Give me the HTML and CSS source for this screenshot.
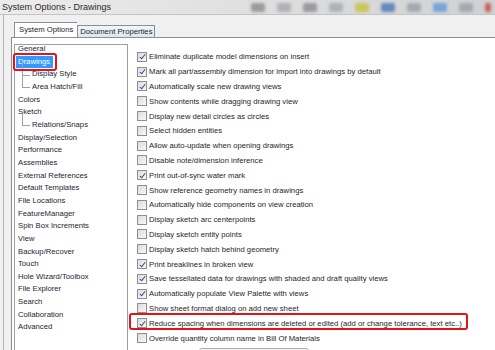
FILE: index.html
```html
<!DOCTYPE html>
<html lang="en">
<head>
    <meta charset="UTF-8">
    <title>System Options - Drawings</title>
    <link rel="stylesheet" href="styles.css">
</head>
<body>
    <div class="topbar">
        <span class="title">System Options - Drawings</span>
        <div class="toolbar">
            <span class="blob g1"></span>
            <span class="blob g2"></span>
            <span class="blob g1"></span>
            <span class="blob g2"></span>
            <span class="blob yellow"></span>
            <span class="blob blue"></span>
            <span class="blob gray"></span>
            <span class="blob sky"></span>
            <span class="blob gray"></span>
            <span class="blob red"></span>
            <span class="blob teal"></span>
        </div>
    </div>

    <div class="dialog">
        <div class="tabs">
            <div class="tab active">System Options</div>
            <div class="tab">Document Properties</div>
        </div>

        <div class="panel">
            <ul class="tree">
                <li>General</li>
                <li><span class="selected">Drawings</span></li>
                <li class="child">Display Style</li>
                <li class="child last">Area Hatch/Fill</li>
                <li>Colors</li>
                <li>Sketch</li>
                <li class="child last">Relations/Snaps</li>
                <li>Display/Selection</li>
                <li>Performance</li>
                <li>Assemblies</li>
                <li>External References</li>
                <li>Default Templates</li>
                <li>File Locations</li>
                <li>FeatureManager</li>
                <li>Spin Box Increments</li>
                <li>View</li>
                <li>Backup/Recover</li>
                <li>Touch</li>
                <li>Hole Wizard/Toolbox</li>
                <li>File Explorer</li>
                <li>Search</li>
                <li>Collaboration</li>
                <li>Advanced</li>
            </ul>

            <div class="options">
                <div class="row"><span class="cb on"></span>Eliminate duplicate model dimensions on insert</div>
                <div class="row"><span class="cb on"></span>Mark all part/assembly dimension for import into drawings by default</div>
                <div class="row"><span class="cb on"></span>Automatically scale new drawing views</div>
                <div class="row"><span class="cb"></span>Show contents while dragging drawing view</div>
                <div class="row"><span class="cb"></span>Display new detail circles as circles</div>
                <div class="row"><span class="cb"></span>Select hidden entities</div>
                <div class="row"><span class="cb"></span>Allow auto-update when opening drawings</div>
                <div class="row"><span class="cb"></span>Disable note/dimension inference</div>
                <div class="row"><span class="cb on"></span>Print out-of-sync water mark</div>
                <div class="row"><span class="cb"></span>Show reference geometry names in drawings</div>
                <div class="row"><span class="cb"></span>Automatically hide components on view creation</div>
                <div class="row"><span class="cb"></span>Display sketch arc centerpoints</div>
                <div class="row"><span class="cb"></span>Display sketch entity points</div>
                <div class="row"><span class="cb"></span>Display sketch hatch behind geometry</div>
                <div class="row"><span class="cb on"></span>Print breaklines in broken view</div>
                <div class="row"><span class="cb on"></span>Save tessellated data for drawings with shaded and draft quality views</div>
                <div class="row"><span class="cb on"></span>Automatically populate View Palette with views</div>
                <div class="row"><span class="cb"></span>Show sheet format dialog on add new sheet</div>
                <div class="row"><span class="cb on"></span>Reduce spacing when dimensions are deleted or edited (add or change tolerance, text etc..)</div>
                <div class="row"><span class="cb"></span>Override quantity column name in Bill Of Materials</div>
                <div class="button"></div>
            </div>
        </div>
    </div>

    <!-- red highlight marks drawn over the screenshot -->
    <div class="mark mark-tree"></div>
    <div class="mark mark-row"></div>
</body>
</html>
```

FILE: styles.css
```css
body {
    margin: 0;
    padding: 0;
    width: 495px;
    height: 350px;
    overflow: hidden;
    background: #f0f0f0;
    font-family: "Liberation Sans", Arial, sans-serif;
    font-size: 7.7px;
    color: #1e1e1e;
    position: relative;
}

.topbar {
    height: 14px;
    display: flex;
    align-items: center;
    background: linear-gradient(to right, #ececec 0%, #e2e2e2 40%, #cfd1d4 100%);
    border-bottom: 1px solid #c4c4c4;
    overflow: hidden;
}

.title {
    font-size: 9px;
    color: #2a2a2a;
    padding-left: 2px;
    white-space: nowrap;
}

.toolbar {
    display: flex;
    align-items: center;
    gap: 12px;
    margin-left: 140px;
    filter: blur(1.8px);
    opacity: 0.8;
}

.blob {
    width: 14px;
    height: 9px;
    border-radius: 2px;
}

.g1 { background: #8a8c90; }
.g2 { background: #a6a8ac; }
.yellow { background: #c9c23c; }
.blue { background: #4a76b8; }
.gray { background: #9aa0a8; }
.sky { background: #5e9ad6; }
.red { background: #c44a3a; width: 6px; }
.teal { background: #5fa3a0; }

.dialog {
    margin-left: 3px;
    border-left: 1px solid #b4b4b4;
    padding-top: 8px;
    height: 327px;
    overflow: hidden;
}

.tabs {
    display: flex;
    align-items: flex-end;
    padding-left: 10px;
    height: 14px;
    position: relative;
    z-index: 1;
}

.tab {
    height: 11px;
    line-height: 11px;
    padding: 0 2px;
    border: 1px solid #8c8e94;
    border-bottom: none;
    background: linear-gradient(#f2f6fb, #dce7f3);
    white-space: nowrap;
}

.tab.active {
    height: 14px;
    line-height: 14px;
    padding: 0 4px;
    background: #fff;
    border-right: none;
}

.panel {
    margin-left: 7px;
    border-top: 1px solid #8c8e94;
    border-left: 1px solid #8c8e94;
    background: #fff;
    height: 312px;
    display: flex;
    align-items: flex-start;
    overflow: hidden;
}

.tree {
    list-style: none;
    margin: 6px 0 0 2px;
    padding: 0 0 0 3px;
    width: 109px;
    height: 310px;
    border: 1px solid #9a9ea6;
    overflow: hidden;
    color: #1d1d33;
}

.tree li {
    height: 12.67px;
    line-height: 12.67px;
    white-space: nowrap;
    position: relative;
}

.tree li:first-child {
    margin-top: -2px;
}

.selected {
    display: inline-block;
    background: #3399ff;
    color: #fff;
    margin-left: -2px;
    padding: 0 3px 0 2px;
    height: 12px;
    line-height: 12px;
}

.tree .child {
    padding-left: 14px;
}

.tree .child::before {
    content: "";
    position: absolute;
    left: 4px;
    top: -6px;
    width: 7px;
    height: 12.5px;
    border-left: 1px solid #a0a0a0;
    border-bottom: 1px solid #a0a0a0;
}

.options {
    margin-left: 9px;
    padding-top: 11.5px;
}

.row {
    height: 14.8px;
    display: flex;
    align-items: center;
    white-space: nowrap;
    color: #262626;
}

.cb {
    width: 8px;
    height: 8px;
    border: 1px solid #8e8f8f;
    background: linear-gradient(135deg, #dcdcdc, #f8f8f8);
    margin-right: 2px;
    position: relative;
    flex: none;
}

.cb.on::after {
    content: "";
    position: absolute;
    left: 2.5px;
    top: 0.5px;
    width: 2px;
    height: 5px;
    border-right: 1.5px solid #2c4a8c;
    border-bottom: 1.5px solid #2c4a8c;
    transform: rotate(38deg);
}

.button {
    margin: 3px 0 0 62px;
    width: 108px;
    height: 20px;
    border: 1px solid #adadad;
    border-radius: 3px;
    background: linear-gradient(#f6f6f6, #e4e4e4);
}

.mark {
    position: absolute;
    border: 2px solid #e3121b;
    border-radius: 3px;
}

.mark-tree {
    left: 13px;
    top: 53px;
    width: 40px;
    height: 14px;
}

.mark-row {
    left: 129px;
    top: 313px;
    width: 335px;
    height: 13px;
}
```
